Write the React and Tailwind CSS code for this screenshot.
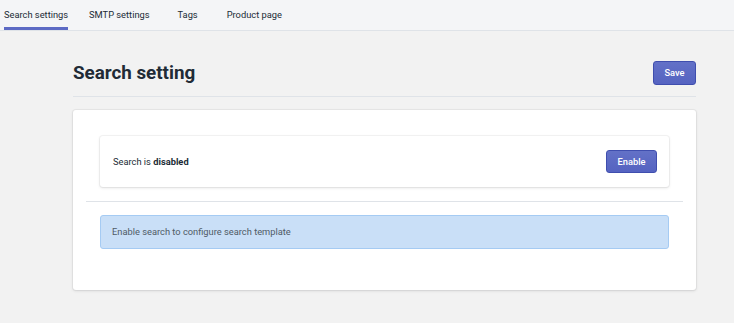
import React from 'react';

const tabs = [
  { label: 'Search settings', active: true, ml: 'ml-[4px]' },
  { label: 'SMTP settings', ml: 'ml-[21px]' },
  { label: 'Tags', ml: 'ml-[28px]' },
  { label: 'Product page', ml: 'ml-[29px]' },
];

const App = () => {
  return (
    <div className="min-h-[323px] bg-[#f2f2f2] font-['Roboto',sans-serif] text-[#212b36]">
      {/* tabs */}
      <div className="flex h-[31px] border-b border-[#dfe3e8] bg-[#f4f5f7]">
        {tabs.map((t) => (
          <div
            key={t.label}
            className={`${t.ml} flex h-full items-center text-[9.3px] ${
              t.active ? 'border-b-[3px] border-[#5c6ac4] pt-[3px]' : ''
            }`}
          >
            {t.label}
          </div>
        ))}
      </div>

      <div className="ml-[73px] w-[623px]">
        <div className="flex items-center justify-between pt-[30px]">
          <h1 className="text-[18.8px] font-bold leading-[24px]">Search setting</h1>
          <button className="h-[24px] w-[43px] rounded-[3px] border border-[#3f4eae] bg-gradient-to-b from-[#6371c7] to-[#5563c1] text-[9.3px] font-medium text-white">
            Save
          </button>
        </div>
        <div className="mt-[11px] border-t border-[#dfe3e8]" />

        <div className="mt-[13px] rounded-[3px] bg-white px-[13px] pt-[26px] pb-[41px] shadow-[0_0_0_1px_rgba(63,63,68,0.05),0_1px_3px_0_rgba(63,63,68,0.15)]">
          <div className="mx-[14px] flex h-[51px] items-center justify-between rounded-[3px] bg-white pl-[13px] pr-[12px] shadow-[0_0_0_1px_rgba(63,63,68,0.05),0_1px_3px_0_rgba(63,63,68,0.15)]">
            <span className="text-[9.3px]">
              Search is <span className="font-bold">disabled</span>
            </span>
            <button className="h-[23px] w-[51px] rounded-[3px] border border-[#3f4eae] bg-gradient-to-b from-[#6371c7] to-[#5563c1] text-[9.3px] font-medium text-white">
              Enable
            </button>
          </div>

          <div className="mt-[14px] border-t border-[#dfe3e8]" />

          <div className="mx-[14px] mt-[13px] flex h-[34px] items-center rounded-[3px] border border-[#a5cbf3] bg-[#c9dff7] pl-[11px] text-[9.3px] text-[#4f5b66]">
            Enable search to configure search template
          </div>
        </div>
      </div>
    </div>
  );
};

export default App;
